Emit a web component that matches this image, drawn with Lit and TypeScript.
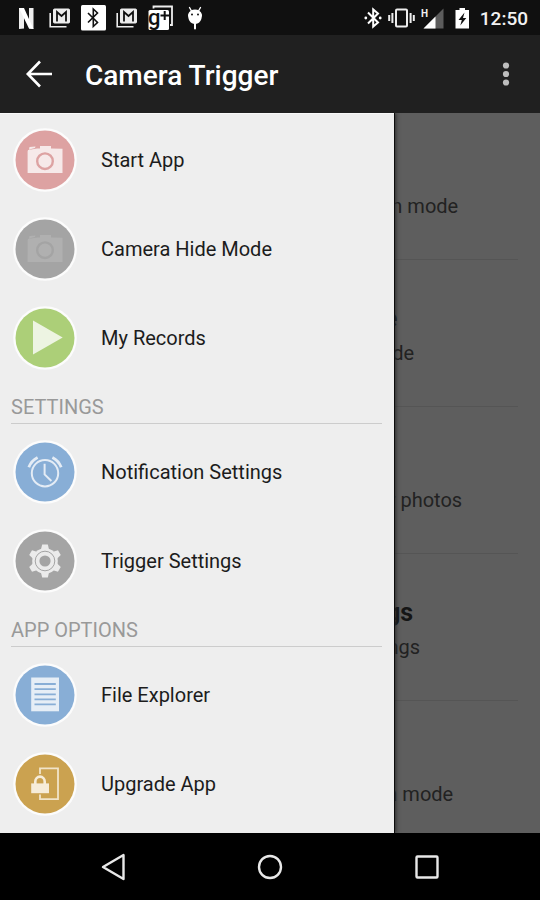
import { LitElement, html, svg, css } from "lit";
import { customElement } from "lit/decorators.js";
import { styleMap } from "lit/directives/style-map.js";

// Drawer glyphs, each drawn on a 64 x 64 disc.
const camera = (tint: string, disc: string) => svg`
  <path fill=${tint} d="M15 22 L24 20.5 L27 20.5 V18 H38 V20.5 L49.5 20.8 V45 H14.6 V23.5 Z M16.5 19 L22.5 18.6 L22 20 L16 21.4 Z"/>
  <circle cx="32" cy="33.2" r="7.8" fill="none" stroke=${disc} stroke-width="2.4"/>`;

const tooth = "M27.6 22 L29.2 15.4 H34.8 L36.4 22 Z";

const glyphs = {
  start: camera("#f6e9e9", "#dda2a2"),
  hide: camera("#b0b0b0", "#a4a4a4"),
  play: svg`<path fill="#edf4e2" d="M20 14.5 L49.7 31.5 L20 48.4 Z"/>`,
  alarm: svg`
    <g fill="none" stroke="#e4ecf5">
      <circle cx="32" cy="33.2" r="13.2" stroke-width="2"/>
      <path stroke-width="2" d="M31.6 23.8 V34.4 L38.4 41"/>
      <path stroke-width="2.8" d="M15.8 27.2 A18 18 0 0 1 24.6 17.4 M48.2 27.2 A18 18 0 0 0 39.4 17.4"/>
    </g>`,
  gear: svg`
    <g fill="#ebebeb">
      ${[0, 60, 120, 180, 240, 300].map(
        (a) => svg`<path d=${tooth} transform="rotate(${a} 32 32)"/>`
      )}
      <circle cx="32" cy="32" r="12.8"/>
    </g>
    <circle cx="32" cy="32" r="9.8" fill="none" stroke="#a4a4a4" stroke-width="1"/>
    <circle cx="32" cy="32" r="5.6" fill="#a4a4a4"/>`,
  file: svg`
    <path fill="#e6eef6" d="M18.2 14.5 H46 V48.3 H18.2 Z"/>
    <path stroke="#88aed6" stroke-width="1.8" d="M21.5 21 H42.8 M21.5 26.2 H42.8 M21.5 31.4 H42.8 M21.5 36.4 H42.8 M21.5 41.4 H42.8"/>`,
  lock: svg`
    <path fill="none" stroke="#f1e4c9" stroke-width="1.8" d="M27 22 V16.4 H45 V47.2 H27 V42.5"/>
    <path fill="none" stroke="#f6ecd9" stroke-width="2.6" d="M22.3 32 V29.5 A4.7 4.9 0 0 1 31.7 29.5 V32"/>
    <rect x="18.2" y="31.4" width="17.8" height="9.8" fill="#f6ecd9"/>`,
};

const groups = [
  {
    heading: "",
    items: [
      { label: "Start App", disc: "#dda2a2", glyph: glyphs.start },
      { label: "Camera Hide Mode", disc: "#a4a4a4", glyph: glyphs.hide },
      { label: "My Records", disc: "#accf78", glyph: glyphs.play },
    ],
  },
  {
    heading: "SETTINGS",
    items: [
      { label: "Notification Settings", disc: "#88aed6", glyph: glyphs.alarm },
      { label: "Trigger Settings", disc: "#a4a4a4", glyph: glyphs.gear },
    ],
  },
  {
    heading: "APP OPTIONS",
    items: [
      { label: "File Explorer", disc: "#88aed6", glyph: glyphs.file },
      { label: "Upgrade App", disc: "#cba250", glyph: glyphs.lock },
    ],
  },
];

// What shows of the page beside the drawer; reach is how far each line extends past it.
const behind = [
  { title: "", titleReach: 0, text: "n mode", reach: 64 },
  { title: "e", titleReach: 3, text: "de", reach: 20 },
  { title: "", titleReach: 0, text: "r photos", reach: 68 },
  { title: "gs", titleReach: 19, text: "ngs", reach: 26 },
  { title: "", titleReach: 0, text: "n mode", reach: 59 },
];

const mail = html`<svg width="22" height="22" viewBox="0 0 22 22">
  <g fill="none" stroke="#ededed">
    <path stroke-width="1.6" d="M1.2 6 V19.7 H17.5"/>
    <rect x="4.5" y="2" width="16" height="14" rx="1" fill="#ededed" stroke-width="1"/>
    <path stroke="#111" stroke-width="1.8" d="M8 14.5 V5 L12.5 9 L17 5 V14.5"/>
  </g></svg>`;

@customElement("app-root")
export class AppRoot extends LitElement {
  static styles = css`
    :host {
      display: flex;
      flex-direction: column;
      min-height: 100vh;
      background: #000;
      color: #fff;
      font-family: Roboto, "Noto Sans", sans-serif;
      font-size: 20px;
      line-height: 24px;
    }
    * { box-sizing: border-box; }
    svg { display: block; flex: none; }
    button {
      display: grid;
      place-items: center;
      padding: 0;
      border: 0;
      background: none;
      color: inherit;
      font: inherit;
      cursor: pointer;
    }
    .status {
      display: flex;
      align-items: center;
      justify-content: space-between;
      height: 35px;
      padding: 0 12px 0 18px;
      background: #101010;
    }
    .notices, .system { display: flex; align-items: center; }
    .notices { gap: 10px; }
    .notices svg:first-child { margin-right: 4px; }
    .system { gap: 6px; }
    .clock { font-size: 19px; font-weight: 500; padding: 2px 0 0 3px; color: #f2f2f2; }
    .mini { font-size: 10px; font-weight: 700; }
    .gplus { font-size: 22px; font-weight: 500; }
    .bar {
      display: flex;
      align-items: center;
      height: 78px;
      padding: 0 10px 0 15px;
      background: #202020;
    }
    .bar button { width: 48px; height: 48px; }
    h1 {
      flex: 1;
      margin: 0;
      padding: 4px 0 0 22px;
      font-size: 28px;
      line-height: 32px;
      font-weight: 500;
    }
    .main {
      flex: 1;
      display: grid;
      grid-template-columns: 73fr 27fr;
      background: #5e5e5e;
    }
    .drawer {
      position: relative;
      padding-top: 1px;
      border-top: 1px solid #f8f8f8;
      background: #eee;
      box-shadow: 1px 0 0 #0c0c0c, 2px 0 4px #2a2a2a;
      clip-path: inset(0 -8px 0 0);
    }
    h2 {
      height: 42px;
      margin: 0 12px 3px 11px;
      padding-top: 13px;
      border-bottom: 1px solid #ccc;
      color: #999;
      font-size: 20px;
      font-weight: 400;
    }
    ul { list-style: none; margin: 0; padding: 0; }
    .item {
      display: flex;
      align-items: center;
      gap: 24px;
      width: 100%;
      height: 89px;
      padding: 0 13px;
      color: #1c1c1c;
      text-align: left;
    }
    .page { overflow: hidden; min-width: 0; color: #222; }
    .entry {
      height: 147px;
      margin-right: 22px;
      padding-top: 44px;
      border-bottom: 1px solid #555;
    }
    .entry:last-child { border-bottom: 0; height: 132px; }
    .line {
      display: flex;
      justify-content: flex-end;
      margin: 0;
      white-space: nowrap;
    }
    .title {
      height: 37px;
      font-size: 25px;
      line-height: 30px;
      font-weight: 700;
      color: #151515;
    }
    .nav {
      display: grid;
      grid-template-columns: repeat(3, 1fr);
      height: 67px;
      padding: 0 34px;
      background: #000;
    }
  `;

  render() {
    return html`
      <div class="status">
        <div class="notices">
          <svg width="17" height="24" viewBox="0 0 17 24">
            <path fill="#eee" d="M1 2 H6 V22.5 L1 23 Z M11 2 H15.5 V23 L11 22.5 Z"/>
            <path fill="#fff" d="M1 2 H6 L15.5 23 L11 22.5 Z"/>
          </svg>
          ${mail}
          <svg width="25" height="26" viewBox="0 0 25 26">
            <rect width="25" height="25.5" rx="1.5" fill="#fff"/>
            <path fill="none" stroke="#111" stroke-width="1.6" d="M7 8 L16.5 17.5 L12.3 21.5 V4 L16.5 8 L7 17.5"/>
          </svg>
          ${mail}
          <svg width="26" height="26" viewBox="0 0 26 26">
            <path fill="none" stroke="#eee" stroke-width="1.8" d="M5.5 3.5 V1.5 H24 V20 H22"/>
            <rect x="0.5" y="5" width="20.5" height="20" rx="1.5" fill="#fff"/>
            <text class="gplus" x="0" y="20" fill="#111">g</text>
            <path stroke="#111" stroke-width="2" d="M12.5 10.5 H21 M16.7 6 V15"/>
          </svg>
          <svg width="22" height="24" viewBox="0 0 22 24">
            <path fill="#fff" d="M4 8.5 C5 5.5 8 3.6 11 3.6 C14 3.6 17 5.5 18 8.5 C18 14 15.5 18 11 18 C6.5 18 4 14 4 8.5 Z"/>
            <path fill="none" stroke="#fff" stroke-width="1.4" stroke-linecap="round" d="M7.5 5 L5.5 1.5 M14.5 5 L16.5 1.5"/>
            <path stroke="#fff" stroke-width="2" stroke-linecap="round" d="M11 17 V22.5"/>
            <circle cx="8" cy="8.5" r="1" fill="#111"/><circle cx="14" cy="8.5" r="1" fill="#111"/>
          </svg>
        </div>
        <div class="system">
          <svg width="18" height="22" viewBox="0 0 18 22">
            <path fill="none" stroke="#fff" stroke-width="2" d="M4 5.5 L14 15.5 L9.2 19.5 V2.5 L14 6.5 L4 16.5"/>
            <circle cx="1.8" cy="11" r="1.4" fill="#fff"/><circle cx="16.2" cy="11" r="1.4" fill="#fff"/>
          </svg>
          <svg width="27" height="22" viewBox="0 0 27 22">
            <g fill="none" stroke="#eee" stroke-width="2">
              <rect x="8" y="2.5" width="11" height="17" rx="1"/>
              <path d="M4.4 6 V16 M1.2 8 V14 M22.6 6 V16 M25.8 8 V14"/>
            </g>
          </svg>
          <svg width="26" height="22" viewBox="0 0 26 22">
            <path fill="#5c5c5c" d="M22.5 1.5 V21.5 H2.5 Z"/>
            <path fill="#fff" d="M14.5 9.5 V21.5 H2.5 Z"/>
            <text class="mini" x="0" y="10" fill="#eee">H</text>
          </svg>
          <svg width="18" height="22" viewBox="0 0 18 22">
            <path fill="#fff" d="M6.5 1 H12 V3 H16 V21.5 H2.5 V3 H6.5 Z"/>
            <path fill="#111" d="M11.5 5.5 L5.5 13 H8.8 L7.3 18.5 L13.3 11 H10 Z"/>
          </svg>
          <time class="clock">12:50</time>
        </div>
      </div>

      <header class="bar">
        <button aria-label="Back">
          <svg width="28" height="28" viewBox="0 0 28 28">
            <path fill="none" stroke="#fff" stroke-width="2.6" d="M15 1.5 L2.8 14 L15 26.5 M2.8 14 H27"/>
          </svg>
        </button>
        <h1>Camera Trigger</h1>
        <button aria-label="More options">
          <svg width="8" height="26" viewBox="0 0 8 26" fill="#bdbdbd">
            <circle cx="4" cy="4.5" r="3.1"/><circle cx="4" cy="13" r="3.1"/><circle cx="4" cy="21.5" r="3.1"/>
          </svg>
        </button>
      </header>

      <div class="main">
        <nav class="drawer" aria-label="Main menu">
          ${groups.map(
            (g) => html`
              ${g.heading ? html`<h2>${g.heading}</h2>` : ""}
              <ul>
                ${g.items.map(
                  (i) => html`<li>
                    <button class="item">
                      <svg width="64" height="64" viewBox="0 0 64 64">
                        <circle cx="32" cy="32" r="31.8" fill="#fcfcfc"/>
                        <circle cx="32" cy="32" r="29.5" fill=${i.disc}/>
                        ${i.glyph}
                      </svg>
                      <span>${i.label}</span>
                    </button>
                  </li>`
                )}
              </ul>
            `
          )}
        </nav>
        <main class="page">
          ${behind.map(
            (b) => html`<section class="entry">
              <p class="line title" style=${styleMap({ width: `${b.titleReach}px` })}>${b.title}</p>
              <p class="line" style=${styleMap({ width: `${b.reach}px` })}>${b.text}</p>
            </section>`
          )}
        </main>
      </div>

      <footer class="nav">
        <button aria-label="Back">
          <svg width="26" height="28" viewBox="0 0 26 28">
            <path fill="none" stroke="#e8e8e8" stroke-width="2.4" stroke-linejoin="round" d="M23.5 2 V26 L3 14 Z"/>
          </svg>
        </button>
        <button aria-label="Home">
          <svg width="26" height="28" viewBox="0 0 26 28">
            <circle cx="13" cy="14" r="11" fill="none" stroke="#e8e8e8" stroke-width="2.4"/>
          </svg>
        </button>
        <button aria-label="Recent apps">
          <svg width="26" height="28" viewBox="0 0 26 28">
            <rect x="2.5" y="3.5" width="21" height="21" rx="1" fill="none" stroke="#e8e8e8" stroke-width="2.4"/>
          </svg>
        </button>
      </footer>
    `;
  }
}
